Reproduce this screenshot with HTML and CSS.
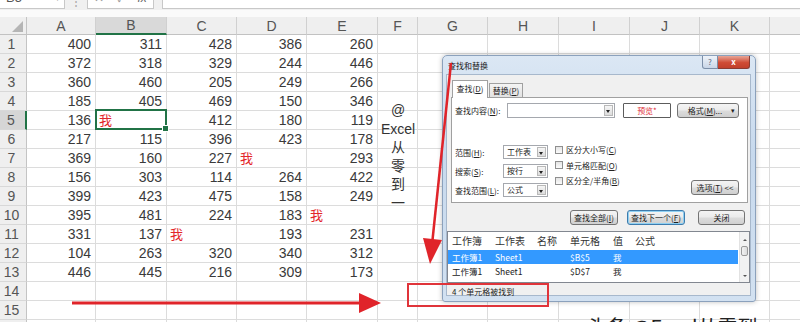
FILE: index.html
```html
<!doctype html>
<html lang="zh-CN">
  <head>
    <meta charset="utf-8">
    <title>查找和替换</title>
    <link rel="stylesheet" href="styles.css">
  </head>

  <body>
    <div class="formula-bar">
      <div class="name-box">B5<span class="nb-arrow">▾</span></div>
      <div class="fb-dots">⋮</div>
      <div class="fb-icons"><span>✕</span><span>✓</span><span class="fx">fx</span></div>
      <div class="fb-input"></div>
    </div>
    <div class="sheet-gap"></div>

    <table class="sheet">
      <colgroup>
        <col class="c-row"><col class="c69"><col class="c71"><col class="c70"><col class="c70"><col class="c71">
        <col class="c40"><col class="c70"><col class="c71"><col class="c71"><col class="c70"><col class="c70"><col class="c70">
      </colgroup>
      <thead>
        <tr>
          <th class="corner"><span class="corner-tri"></span></th>
          <th>A</th><th class="sel">B</th><th>C</th><th>D</th><th>E</th><th>F</th>
          <th>G</th><th>H</th><th>I</th><th>J</th><th>K</th><th></th>
        </tr>
      </thead>
      <tbody>
        <tr><th class="row">1</th><td>400</td><td>311</td><td>428</td><td>386</td><td>260</td><td></td><td></td><td></td><td></td><td></td><td></td><td></td></tr>
        <tr><th class="row">2</th><td>372</td><td>318</td><td>329</td><td>244</td><td>446</td><td></td><td></td><td></td><td></td><td></td><td></td><td></td></tr>
        <tr><th class="row">3</th><td>360</td><td>460</td><td>205</td><td>249</td><td>266</td><td></td><td></td><td></td><td></td><td></td><td></td><td></td></tr>
        <tr><th class="row">4</th><td>185</td><td>405</td><td>469</td><td>150</td><td>346</td><td></td><td></td><td></td><td></td><td></td><td></td><td></td></tr>
        <tr><th class="row sel">5</th><td>136</td><td class="mark active">我</td><td>412</td><td>180</td><td>119</td><td></td><td></td><td></td><td></td><td></td><td></td><td></td></tr>
        <tr><th class="row">6</th><td>217</td><td>115</td><td>396</td><td>423</td><td>178</td><td></td><td></td><td></td><td></td><td></td><td></td><td></td></tr>
        <tr><th class="row">7</th><td>369</td><td>160</td><td>227</td><td class="mark">我</td><td>293</td><td></td><td></td><td></td><td></td><td></td><td></td><td></td></tr>
        <tr><th class="row">8</th><td>156</td><td>303</td><td>114</td><td>264</td><td>422</td><td></td><td></td><td></td><td></td><td></td><td></td><td></td></tr>
        <tr><th class="row">9</th><td>399</td><td>423</td><td>475</td><td>158</td><td>249</td><td></td><td></td><td></td><td></td><td></td><td></td><td></td></tr>
        <tr><th class="row">10</th><td>395</td><td>481</td><td>224</td><td>183</td><td class="mark">我</td><td></td><td></td><td></td><td></td><td></td><td></td><td></td></tr>
        <tr><th class="row">11</th><td>331</td><td>137</td><td class="mark">我</td><td>193</td><td>231</td><td></td><td></td><td></td><td></td><td></td><td></td><td></td></tr>
        <tr><th class="row">12</th><td>104</td><td>263</td><td>320</td><td>340</td><td>312</td><td></td><td></td><td></td><td></td><td></td><td></td><td></td></tr>
        <tr><th class="row">13</th><td>446</td><td>445</td><td>216</td><td>309</td><td>173</td><td></td><td></td><td></td><td></td><td></td><td></td><td></td></tr>
        <tr><th class="row">14</th><td></td><td></td><td></td><td></td><td></td><td></td><td></td><td></td><td></td><td></td><td></td><td></td></tr>
        <tr><th class="row">15</th><td></td><td></td><td></td><td></td><td></td><td></td><td></td><td></td><td></td><td></td><td></td><td></td></tr>
        <tr><th class="row">16</th><td></td><td></td><td></td><td></td><td></td><td></td><td></td><td></td><td></td><td></td><td></td><td></td></tr>
      </tbody>
    </table>

    <!-- text box sitting in column F -->
    <div class="side-note">
      <div>@</div>
      <div>Excel</div>
      <div>从</div>
      <div>零</div>
      <div>到</div>
      <div>一</div>
    </div>

    <div class="dialog">
      <div class="dlg-title">
        <span>查找和替换</span>
        <span class="tb-help">?</span>
        <span class="tb-close">x</span>
      </div>
      <div class="dlg-body">
        <div class="tabs">
          <div class="tab on">查找(<u>D</u>)</div>
          <div class="tab">替换(<u>P</u>)</div>
        </div>
        <div class="tab-page">
          <div class="find-row">
            <span class="lbl-find">查找内容(<u>N</u>):</span>
            <span class="combo wide"><span class="combo-arrow"></span></span>
            <span class="btn preview">预览*</span>
            <span class="btn format">格式(<u>M</u>)... <span class="caret">▾</span></span>
          </div>
          <div class="options">
            <div class="opt-grid">
              <span>范围(<u>H</u>):</span><span class="combo">工作表<span class="combo-arrow"></span></span>
              <span>搜索(<u>S</u>):</span><span class="combo">按行<span class="combo-arrow"></span></span>
              <span>查找范围(<u>L</u>):</span><span class="combo">公式<span class="combo-arrow"></span></span>
            </div>
            <div class="checks">
              <label class="check"><span class="box"></span>区分大小写(<u>C</u>)</label>
              <label class="check"><span class="box"></span>单元格匹配(<u>O</u>)</label>
              <label class="check"><span class="box"></span>区分全/半角(<u>B</u>)</label>
            </div>
            <span class="btn opt-btn">选项(<u>T</u>) &lt;&lt;</span>
          </div>
        </div>

        <div class="dlg-actions">
          <span class="btn act-all">查找全部(<u>I</u>)</span>
          <span class="btn act-next default">查找下一个(<u>F</u>)</span>
          <span class="btn act-close">关闭</span>
        </div>

        <div class="results">
          <div class="res-row res-head">
            <span>工作簿</span><span>工作表</span><span>名称</span><span>单元格</span><span>值</span><span>公式</span>
          </div>
          <div class="res-row picked">
            <span>工作簿1</span><span>Sheet1</span><span></span><span>$B$5</span><span>我</span><span></span>
          </div>
          <div class="res-row">
            <span>工作簿1</span><span>Sheet1</span><span></span><span>$D$7</span><span>我</span><span></span>
          </div>
          <div class="res-row">
            <span>工作簿1</span><span>Sheet1</span><span></span><span>$E$10</span><span>我</span><span></span>
          </div>
          <div class="scrollbar">
            <span class="sb-up"></span>
            <span class="sb-thumb"></span>
            <span class="sb-down"></span>
          </div>
        </div>
        <div class="dlg-status">4 个单元格被找到</div>
      </div>
    </div>

    <!-- red annotations drawn over the screenshot -->
    <svg class="marks" width="800" height="322" viewBox="0 0 800 322">
      <line x1="72" y1="303" x2="362" y2="303" stroke="#e0242a" stroke-width="3" />
      <polygon points="359,293 381,303 359,313" fill="#e0242a" />
      <line x1="451" y1="63" x2="432.5" y2="240" stroke="#e0242a" stroke-width="2.5" />
      <polygon points="423,238 442,240 430,264" fill="#e0242a" />
      <rect x="408" y="284" width="140" height="22" fill="none" stroke="#e0343a" stroke-width="2" />
    </svg>

    <div class="watermark">头条 @Excel从零到一</div>
  </body>
</html>
```

FILE: styles.css
```css
* {
  box-sizing: border-box;
}

html,
body {
  margin: 0;
  height: 322px;
  overflow: hidden;
  background: #fff;
}

body {
  position: relative;
  font-family: "Liberation Sans", "Noto Sans CJK SC", sans-serif;
  color: #333;
}

/* formula bar, mostly scrolled off the top */
.formula-bar {
  display: flex;
  align-items: flex-end;
  height: 10px;
  overflow: hidden;
  background: #f0f0f0;
}

.name-box {
  position: relative;
  width: 65px;
  height: 22px;
  margin-bottom: 1px;
  padding-left: 6px;
  background: #fff;
  border: 1px solid #c8c8c8;
  border-left: 0;
  font-size: 13px;
  line-height: 20px;
  color: #555;
}

.nb-arrow {
  position: absolute;
  right: 4px;
  font-size: 10px;
  color: #888;
}

.fb-dots {
  width: 22px;
  text-align: center;
  font-size: 12px;
  line-height: 8px;
  color: #aaa;
}

.fb-icons {
  display: flex;
  justify-content: space-around;
  width: 67px;
  height: 22px;
  margin-bottom: 1px;
  background: #fff;
  border: 1px solid #c8c8c8;
  font-size: 12px;
  line-height: 20px;
  color: #999;
}

.fb-icons .fx {
  font-style: italic;
  color: #666;
}

.fb-input {
  flex: 1;
  height: 22px;
  margin-left: 8px;
  margin-bottom: 1px;
  background: #fff;
  border: 1px solid #c8c8c8;
  border-right: 0;
}

.sheet-gap {
  height: 7px;
  background: #fafafa;
}

/* worksheet grid */
.sheet {
  width: 840px;
  table-layout: fixed;
  border-collapse: separate;
  border-spacing: 0;
  font-size: 14px;
}

.c-row { width: 27px; }
.c40 { width: 40px; }
.c69 { width: 69px; }
.c70 { width: 70px; }
.c71 { width: 71px; }

.sheet th,
.sheet td {
  padding: 0;
  border-right: 1px solid #dcdcdc;
  border-bottom: 1px solid #dcdcdc;
  white-space: nowrap;
  overflow: hidden;
}

.sheet thead th {
  height: 17px;
  line-height: 16px;
  background: #efefef;
  border-right-color: #d0d0d0;
  border-bottom-color: #c2c2c2;
  font-weight: normal;
  color: #555;
}

.sheet thead th.sel {
  background: #d9d9d9;
  border-bottom: 2px solid #217346;
}

.sheet th.corner {
  position: relative;
  border-right-color: #c4c4c4;
}

.corner-tri {
  position: absolute;
  right: 3px;
  bottom: 2px;
  width: 0;
  height: 0;
  border-left: 11px solid transparent;
  border-bottom: 11px solid #b5b5b5;
}

.sheet td {
  height: 19px;
  line-height: 18px;
  padding-right: 4px;
  text-align: right;
  color: #3a3a3a;
}

.sheet th.row {
  height: 19px;
  line-height: 18px;
  padding-right: 3px;
  background: #efefef;
  border-right-color: #c4c4c4;
  border-bottom-color: #d8d8d8;
  font-weight: normal;
  text-align: center;
  color: #555;
}

.sheet th.row.sel {
  background: #d6d6d6;
  border-right: 2px solid #217346;
}

.sheet td.mark {
  padding: 0 0 0 3px;
  text-align: left;
  font-family: "Noto Sans CJK SC", sans-serif;
  font-size: 13px;
  color: #e3262a;
}

.sheet td.active {
  position: relative;
  overflow: visible;
}

.sheet td.active::after {
  content: "";
  position: absolute;
  top: -2px;
  left: -1px;
  right: -1px;
  bottom: -1px;
  border: 2px solid #217346;
}

.sheet td.active::before {
  content: "";
  position: absolute;
  right: -3px;
  bottom: -3px;
  width: 5px;
  height: 5px;
  background: #217346;
  border: 1px solid #fff;
  z-index: 1;
}

.side-note {
  position: absolute;
  left: 380px;
  top: 101px;
  width: 36px;
  font-size: 14px;
  line-height: 18.6px;
  text-align: center;
  color: #333;
}

/* find & replace window */
.dialog {
  position: absolute;
  left: 442px;
  top: 55px;
  display: flex;
  flex-direction: column;
  width: 314px;
  height: 247px;
  padding: 0 5px 6px 4px;
  background: linear-gradient(#dbe7f4, #c7d9ed 40%, #d2e1f1);
  border: 1px solid #8ba1bc;
  border-radius: 5px 5px 3px 3px;
  box-shadow: 0 0 5px rgba(0, 0, 0, 0.25);
  font-family: "Noto Sans CJK SC", sans-serif;
  font-size: 8px;
  color: #222;
}

.dlg-title {
  display: flex;
  align-items: center;
  height: 19px;
  padding-left: 1px;
}

.tb-help,
.tb-close {
  align-self: flex-start;
  height: 13px;
  line-height: 12px;
  text-align: center;
  border: 1px solid #7c8fa8;
  border-top: 0;
}

.tb-help {
  width: 16px;
  margin-left: auto;
  background: linear-gradient(#eef3f9, #c9d6e7);
  border-radius: 0 0 0 3px;
  color: #5a6a80;
}

.tb-close {
  width: 32px;
  background: linear-gradient(#e8a596, #cf4b35 55%, #c1402c);
  border-color: #8a3b32;
  border-left: 0;
  border-radius: 0 0 3px 0;
  color: #fff;
  font-weight: bold;
}

.dlg-body {
  height: 220px;
  background: #f0f0f0;
  box-shadow: 0 0 0 1px #a7b8cc;
}

.tabs {
  display: flex;
  align-items: flex-end;
  height: 17px;
  margin: 5px 0 0 5px;
}

.tab {
  position: relative;
  width: 34px;
  height: 14px;
  margin-left: 1px;
  line-height: 13px;
  text-align: center;
  background: linear-gradient(#f4f4f4, #e2e2e2);
  border: 1px solid #a0a0a0;
  border-bottom: 0;
}

.tab.on {
  width: 36px;
  height: 18px;
  margin: 0 0 -1px 0;
  line-height: 16px;
  background: #fff;
  z-index: 1;
}

.tab-page {
  height: 106px;
  margin: 0 2px 0 4px;
  padding: 5px 8px 0 3px;
  background: #fff;
  border: 1px solid #a0a0a0;
}

.find-row {
  display: flex;
  align-items: center;
  height: 15px;
}

.lbl-find {
  width: 52px;
}

.combo {
  position: relative;
  display: inline-block;
  width: 45px;
  height: 14px;
  padding-left: 3px;
  line-height: 12px;
  background: #fff;
  border: 1px solid #a5a8ae;
}

.combo.wide {
  width: 108px;
  height: 15px;
}

.combo-arrow {
  position: absolute;
  top: 1px;
  right: 1px;
  bottom: 1px;
  width: 9px;
  background: linear-gradient(#f6f6f6, #dcdcdc);
  border: 1px solid #b9b9b9;
}

.combo-arrow::after {
  content: "";
  position: absolute;
  left: 1px;
  top: 4px;
  border-left: 2.5px solid transparent;
  border-right: 2.5px solid transparent;
  border-top: 3px solid #222;
}

.btn {
  display: inline-block;
  height: 15px;
  line-height: 13px;
  text-align: center;
  white-space: nowrap;
  background: linear-gradient(#f4f4f4, #ebebeb 48%, #dcdcdc 52%, #d0d0d0);
  border: 1px solid #747474;
  border-radius: 3px;
}

.btn.preview {
  width: 48px;
  margin-left: 8px;
  background: #fff;
  border-color: #5c5c5c;
  border-radius: 1px;
  color: #e0303a;
}

.btn.format {
  position: relative;
  width: 62px;
  margin-left: 6px;
  padding-right: 6px;
}

.caret {
  position: absolute;
  right: 3px;
  font-size: 7px;
}

.options {
  display: flex;
  align-items: flex-start;
  margin-top: 27px;
}

.opt-grid {
  display: grid;
  grid-template-columns: 48px 45px;
  grid-auto-rows: 14px;
  row-gap: 5px;
  align-items: center;
}

.checks {
  display: flex;
  flex-direction: column;
  margin: -3px 0 0 7px;
}

.check {
  display: flex;
  align-items: center;
  height: 15.5px;
}

.check .box {
  width: 8px;
  height: 8px;
  margin-right: 3px;
  background: linear-gradient(#e4e4e4, #fbfbfb);
  border: 1px solid #8f8f8f;
}

.btn.opt-btn {
  width: 48px;
  margin: 35px 0 0 auto;
}

.dlg-actions {
  display: flex;
  justify-content: flex-end;
  height: 15px;
  margin-top: 7px;
  padding-right: 5px;
}

.act-all { width: 48px; }
.act-next { width: 58px; margin-left: 9px; }
.act-close { width: 47px; margin-left: 13px; }

.btn.default {
  border-color: #3d7bad;
  box-shadow: inset 0 0 0 1px #8fd0f2;
}

.results {
  position: relative;
  height: 52px;
  margin-top: 6px;
  overflow: hidden;
  background: #fff;
  border: 1px solid #828790;
}

.res-row {
  display: grid;
  grid-template-columns: 43px 42px 33px 43px 22px 1fr;
  height: 14px;
  margin-right: 11px;
  padding-left: 4px;
  font-size: 8.5px;
  line-height: 14px;
  color: #222;
}

.res-head {
  height: 18px;
  font-size: 10px;
  line-height: 18px;
  color: #333;
}

.res-row.picked {
  background: #3399ff;
  color: #fff;
}

.scrollbar {
  position: absolute;
  top: 0;
  right: 0;
  bottom: 0;
  display: flex;
  flex-direction: column;
  align-items: center;
  width: 10px;
  background: #f2f2f2;
  border-left: 1px solid #e2e2e2;
}

.sb-up,
.sb-down {
  width: 0;
  height: 0;
  border-left: 2px solid transparent;
  border-right: 2px solid transparent;
}

.sb-up {
  margin-top: 7px;
  border-bottom: 2px solid #555;
}

.sb-thumb {
  width: 7px;
  height: 10px;
  margin-top: 5px;
  background: linear-gradient(90deg, #f3f3f3, #dcdcdc);
  border: 1px solid #9a9a9a;
  border-radius: 2px;
}

.sb-down {
  margin-top: auto;
  margin-bottom: 5px;
  border-top: 2px solid #555;
}

.dlg-status {
  height: 12px;
  padding-left: 5px;
  line-height: 17px;
  font-size: 8px;
}

.marks {
  position: absolute;
  left: 0;
  top: 0;
  pointer-events: none;
}

.watermark {
  position: absolute;
  left: 587px;
  top: 317px;
  font-family: "Noto Sans CJK SC", sans-serif;
  font-size: 20px;
  line-height: 1;
  white-space: nowrap;
  color: #222;
}
```
